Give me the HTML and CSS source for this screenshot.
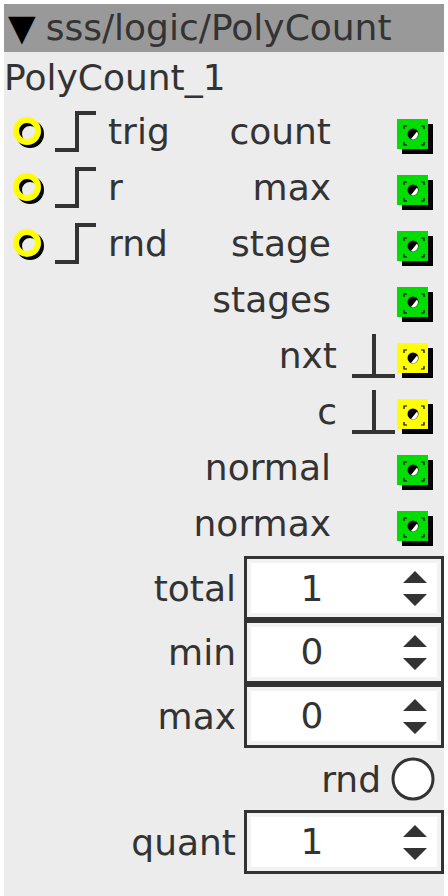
FILE: index.html
```html
<!DOCTYPE html>
<html lang="en">
<head>
  <meta charset="UTF-8" />
  <meta name="viewport" content="width=device-width, initial-scale=1.0" />
  <title>sss/logic/PolyCount</title>
  <link rel="stylesheet" href="styles.css">
</head>
<body>
<div id="object">
  <div class="title"><span class="caret">&#9660;</span>sss/logic/PolyCount</div>
  <div class="instance">PolyCount_1</div>

  <div class="io">
    <div class="inlets">
      <div class="inlet">
        <svg class="jack" width="38" height="38" viewBox="0 0 38 38"><circle cx="18" cy="18" r="11" fill="none" stroke="#000" stroke-width="6"/><circle cx="15" cy="15" r="11" fill="none" stroke="#ffff00" stroke-width="6"/></svg>
        <svg class="kind" width="46" height="56" viewBox="0 0 46 56"><path d="M2 46H24V9H43" fill="none" stroke="#333" stroke-width="4"/></svg>
        <span class="label">trig</span>
      </div>
      <div class="inlet">
        <svg class="jack" width="38" height="38" viewBox="0 0 38 38"><circle cx="18" cy="18" r="11" fill="none" stroke="#000" stroke-width="6"/><circle cx="15" cy="15" r="11" fill="none" stroke="#ffff00" stroke-width="6"/></svg>
        <svg class="kind" width="46" height="56" viewBox="0 0 46 56"><path d="M2 46H24V9H43" fill="none" stroke="#333" stroke-width="4"/></svg>
        <span class="label">r</span>
      </div>
      <div class="inlet">
        <svg class="jack" width="38" height="38" viewBox="0 0 38 38"><circle cx="18" cy="18" r="11" fill="none" stroke="#000" stroke-width="6"/><circle cx="15" cy="15" r="11" fill="none" stroke="#ffff00" stroke-width="6"/></svg>
        <svg class="kind" width="46" height="56" viewBox="0 0 46 56"><path d="M2 46H24V9H43" fill="none" stroke="#333" stroke-width="4"/></svg>
        <span class="label">rnd</span>
      </div>
    </div>

    <div class="outlets">
      <div class="outlet frac"><span class="label">count</span><span class="kind"></span>
        <svg class="port" width="36" height="36" viewBox="0 0 36 36"><rect x="5" y="5" width="31" height="30" fill="#000"/><rect x="0" y="0" width="31" height="30" fill="#00dd00"/><path d="M7 10V7H10M24 7H27V10M7 23V26H10M24 26H27V23" fill="none" stroke="#000" stroke-width="1.2"/><circle cx="16" cy="15" r="5.5" fill="#000"/><path d="M20 12.5A5 5 0 0 1 14 20Z" fill="#fff"/></svg></div>
      <div class="outlet frac"><span class="label">max</span><span class="kind"></span>
        <svg class="port" width="36" height="36" viewBox="0 0 36 36"><rect x="5" y="5" width="31" height="30" fill="#000"/><rect x="0" y="0" width="31" height="30" fill="#00dd00"/><path d="M7 10V7H10M24 7H27V10M7 23V26H10M24 26H27V23" fill="none" stroke="#000" stroke-width="1.2"/><circle cx="16" cy="15" r="5.5" fill="#000"/><path d="M20 12.5A5 5 0 0 1 14 20Z" fill="#fff"/></svg></div>
      <div class="outlet frac"><span class="label">stage</span><span class="kind"></span>
        <svg class="port" width="36" height="36" viewBox="0 0 36 36"><rect x="5" y="5" width="31" height="30" fill="#000"/><rect x="0" y="0" width="31" height="30" fill="#00dd00"/><path d="M7 10V7H10M24 7H27V10M7 23V26H10M24 26H27V23" fill="none" stroke="#000" stroke-width="1.2"/><circle cx="16" cy="15" r="5.5" fill="#000"/><path d="M20 12.5A5 5 0 0 1 14 20Z" fill="#fff"/></svg></div>
      <div class="outlet frac"><span class="label">stages</span><span class="kind"></span>
        <svg class="port" width="36" height="36" viewBox="0 0 36 36"><rect x="5" y="5" width="31" height="30" fill="#000"/><rect x="0" y="0" width="31" height="30" fill="#00dd00"/><path d="M7 10V7H10M24 7H27V10M7 23V26H10M24 26H27V23" fill="none" stroke="#000" stroke-width="1.2"/><circle cx="16" cy="15" r="5.5" fill="#000"/><path d="M20 12.5A5 5 0 0 1 14 20Z" fill="#fff"/></svg></div>
      <div class="outlet bool"><span class="label">nxt</span>
        <svg class="kind" width="44" height="56" viewBox="0 0 44 56"><path d="M0 48H43M22 6V48" fill="none" stroke="#333" stroke-width="4"/></svg>
        <svg class="port" width="36" height="36" viewBox="0 0 36 36"><rect x="5" y="5" width="31" height="30" fill="#000"/><rect x="0" y="0" width="31" height="30" fill="#ffff00"/><path d="M7 10V7H10M24 7H27V10M7 23V26H10M24 26H27V23" fill="none" stroke="#000" stroke-width="1.2"/><circle cx="16" cy="15" r="5.5" fill="#000"/><path d="M20 12.5A5 5 0 0 1 14 20Z" fill="#fff"/></svg></div>
      <div class="outlet bool"><span class="label">c</span>
        <svg class="kind" width="44" height="56" viewBox="0 0 44 56"><path d="M0 48H43M22 6V48" fill="none" stroke="#333" stroke-width="4"/></svg>
        <svg class="port" width="36" height="36" viewBox="0 0 36 36"><rect x="5" y="5" width="31" height="30" fill="#000"/><rect x="0" y="0" width="31" height="30" fill="#ffff00"/><path d="M7 10V7H10M24 7H27V10M7 23V26H10M24 26H27V23" fill="none" stroke="#000" stroke-width="1.2"/><circle cx="16" cy="15" r="5.5" fill="#000"/><path d="M20 12.5A5 5 0 0 1 14 20Z" fill="#fff"/></svg></div>
      <div class="outlet frac"><span class="label">normal</span><span class="kind"></span>
        <svg class="port" width="36" height="36" viewBox="0 0 36 36"><rect x="5" y="5" width="31" height="30" fill="#000"/><rect x="0" y="0" width="31" height="30" fill="#00dd00"/><path d="M7 10V7H10M24 7H27V10M7 23V26H10M24 26H27V23" fill="none" stroke="#000" stroke-width="1.2"/><circle cx="16" cy="15" r="5.5" fill="#000"/><path d="M20 12.5A5 5 0 0 1 14 20Z" fill="#fff"/></svg></div>
      <div class="outlet frac"><span class="label">normax</span><span class="kind"></span>
        <svg class="port" width="36" height="36" viewBox="0 0 36 36"><rect x="5" y="5" width="31" height="30" fill="#000"/><rect x="0" y="0" width="31" height="30" fill="#00dd00"/><path d="M7 10V7H10M24 7H27V10M7 23V26H10M24 26H27V23" fill="none" stroke="#000" stroke-width="1.2"/><circle cx="16" cy="15" r="5.5" fill="#000"/><path d="M20 12.5A5 5 0 0 1 14 20Z" fill="#fff"/></svg></div>
    </div>
  </div>

  <div class="params">
    <div class="param">
      <span class="label">total</span>
      <div class="spin"><span class="value">1</span>
        <svg class="arrows" width="26" height="36" viewBox="0 0 26 36"><path d="M1 13L13 1L25 13ZM1 24H25L13 36Z" fill="#333"/></svg></div>
    </div>
    <div class="param">
      <span class="label">min</span>
      <div class="spin"><span class="value">0</span>
        <svg class="arrows" width="26" height="36" viewBox="0 0 26 36"><path d="M1 13L13 1L25 13ZM1 24H25L13 36Z" fill="#333"/></svg></div>
    </div>
    <div class="param">
      <span class="label">max</span>
      <div class="spin"><span class="value">0</span>
        <svg class="arrows" width="26" height="36" viewBox="0 0 26 36"><path d="M1 13L13 1L25 13ZM1 24H25L13 36Z" fill="#333"/></svg></div>
    </div>
    <div class="param toggle-row">
      <span class="label">rnd</span>
      <svg class="toggle" width="44" height="44" viewBox="0 0 44 44"><circle cx="22" cy="22" r="20" fill="#fff" stroke="#333" stroke-width="3"/></svg>
    </div>
    <div class="param">
      <span class="label">quant</span>
      <div class="spin"><span class="value">1</span>
        <svg class="arrows" width="26" height="36" viewBox="0 0 26 36"><path d="M1 13L13 1L25 13ZM1 24H25L13 36Z" fill="#333"/></svg></div>
    </div>
  </div>
</div>
</body>
</html>
```

FILE: styles.css
```css
html, body {
  margin: 0;
  padding: 0;
  background: #fff;
}
body {
  font-family: 'DejaVu Sans', Verdana, sans-serif;
  font-size: 36px;
  color: #333;
  overflow: hidden;
}
#object {
  margin: 4px;
  width: 440px;
  height: 900px;
  background: #ececec;
}
.title {
  height: 48px;
  line-height: 48px;
  background: #999;
  padding-left: 4px;
  white-space: nowrap;
}
.caret {
  color: #000;
  margin-right: 10px;
}
.instance {
  height: 52px;
  line-height: 52px;
}

/* inlets and outlets side by side */
.io {
  display: flex;
}
.inlets {
  width: 180px;
}
.inlet {
  height: 56px;
  display: flex;
  align-items: center;
  padding-left: 8px;
}
.inlet .jack {
  margin-top: 5px;
}
.inlet .kind {
  margin-left: 3px;
}
.inlet .label {
  margin-left: 9px;
  line-height: 56px;
}
.outlets {
  flex: 1;
}
.outlet {
  height: 56px;
  display: flex;
  align-items: center;
  justify-content: flex-end;
  padding-right: 11px;
}
.outlet .label {
  line-height: 56px;
}
.outlet.frac .label {
  margin-right: 21px;
}
.outlet.bool .label {
  margin-right: 15px;
}
.outlet span.kind {
  width: 44px;
  height: 56px;
}
.outlet .port {
  margin-left: 1px;
  margin-top: 10px;
}

/* parameters */
.params {
  padding-top: 4px;
}
.param {
  height: 64px;
  display: flex;
  align-items: center;
  justify-content: flex-end;
}
.param .label {
  margin-right: 8px;
}
.spin {
  box-sizing: border-box;
  width: 200px;
  height: 64px;
  border: 3px solid #333;
  background: #fff;
  box-shadow: inset 0 0 0 4px #f2f2f2;
  display: flex;
  align-items: center;
}
.param + .param .spin {
  margin-top: -1px;
}
.spin .value {
  width: 130px;
  text-align: center;
}
.spin .arrows {
  margin-left: 25px;
}
.toggle-row {
  height: 62px;
  padding-right: 9px;
}
.toggle-row .label {
  margin-right: 10px;
}
```
